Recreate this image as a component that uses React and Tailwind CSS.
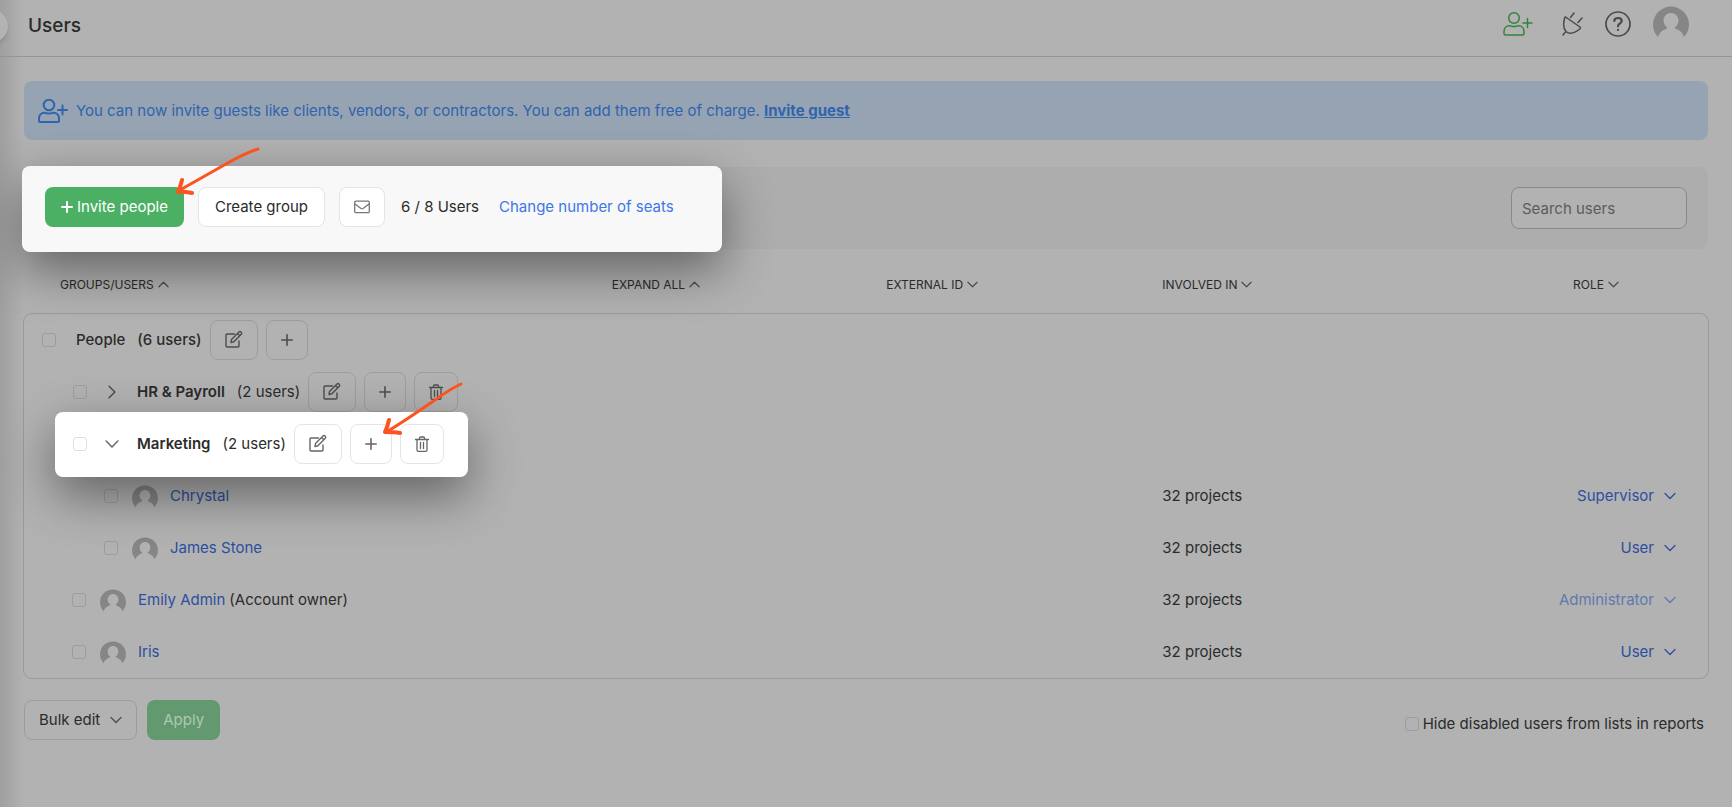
import React, { useState } from 'react';

const Icon = ({ className, box = '0 0 16 16', width = 1, children }) => (
    <svg className={className} viewBox={box} fill="none" stroke="currentColor" strokeWidth={width} strokeLinecap="round" strokeLinejoin="round" aria-hidden="true">
        {children}
    </svg>
);

const Chevron = ({ dir = 'down', className = 'h-3 w-3' }) => (
    <Icon className={className} box="0 0 12 12" width={1.3}>
        {dir === 'down' && <path d="M1 3.5 L6 8.5 L11 3.5" />}
        {dir === 'up' && <path d="M1 8.5 L6 3.5 L11 8.5" />}
        {dir === 'right' && <path d="M3.5 1 L8.5 6 L3.5 11" />}
    </Icon>
);

const UserPlus = ({ className, width }) => (
    <Icon className={className} box="0 0 30 26" width={width}>
        <circle cx="11" cy="7" r="5.3" />
        <path d="M6.5 14.8 C8 14.8 8.5 15.6 11 15.6 C13.5 15.6 14 14.8 15.5 14.8 C19 14.8 21 17.5 21 20.5 V22.5 Q21 24 19.5 24 H2.5 Q1 24 1 22.5 V20.5 C1 17.5 3 14.8 6.5 14.8 Z" />
        <path d="M24.5 7.5 V16.5 M20 12 H29" />
    </Icon>
);

const Avatar = ({ className }) => (
    <svg className={className} viewBox="0 0 36 32" fill="currentColor" aria-hidden="true">
        <path d="M5 31 A18 18 0 1 1 31 31 C30 27 27 24.5 23 23 C21 22 22 21 23.5 20 C28 14 24 7 18 7 C12 7 8 14 12.5 20 C14 21 15 22 13 23 C9 24.5 6 27 5 31 Z" />
    </svg>
);

const EditIcon = () => (
    <Icon className="h-5 w-5" box="0 0 20 20" width={1.4}>
        <path d="M10.5 4 H3 Q2 4 2 5 V16 Q2 17 3 17 H14 Q15 17 15 16 V11" />
        <path d="M7 12.5 L7.5 9.5 L15 2 Q16 1 17.2 2.2 Q18.3 3.3 17.3 4.3 L9.9 11.8 Z M13.5 3.5 L15.8 5.8" />
    </Icon>
);

const PlusIcon = () => (
    <Icon className="h-3 w-3" box="0 0 12 12" width={1.6}>
        <path d="M6 0.8 V11.2 M0.8 6 H11.2" />
    </Icon>
);

const TrashIcon = () => (
    <Icon className="h-4 w-4" width={1.3}>
        <path d="M1.5 3.5 H14.5 M3 3.5 V14 Q3 15.3 4.3 15.3 H11.7 Q13 15.3 13 14 V3.5 M5 3.5 L6 1 H10 L11 3.5 M6.5 6.5 V12.5 M9.5 6.5 V12.5" />
    </Icon>
);

const Checkbox = ({ label, light }) => (
    <input
        type="checkbox"
        aria-label={label}
        className={`h-[14px] w-[14px] shrink-0 appearance-none rounded-[3px] border ${light ? 'border-[#dedede]' : 'border-[#9d9d9d]'}`}
    />
);

const GroupActions = ({ name, canDelete, light }) => {
    const button = `flex h-10 items-center justify-center rounded-lg border ${light ? 'border-[#e4e4e4] text-[#666666]' : 'border-[#9d9d9d] text-[#4d4d4d]'}`;
    return (
        <div className="flex gap-2">
            <button type="button" aria-label={`Edit ${name}`} className={`${button} w-12`}><EditIcon /></button>
            <button type="button" aria-label={`Add to ${name}`} className={`${button} w-[42px]`}><PlusIcon /></button>
            {canDelete && (
                <button type="button" aria-label={`Delete ${name}`} className={`${button} w-[44px]`}><TrashIcon /></button>
            )}
        </div>
    );
};

const columns = [
    { label: 'GROUPS/USERS', dir: 'up', className: 'w-[34.9%] pl-9' },
    { label: 'EXPAND ALL', dir: 'up', className: 'w-[16.3%]' },
    { label: 'EXTERNAL ID', dir: 'down', className: 'w-[16.4%]' },
    { label: 'INVOLVED IN', dir: 'down', className: 'w-[16.4%]' },
    { label: 'ROLE', dir: 'down', className: 'pr-[89px]', end: true }
];

const users = [
    { name: 'Chrystal', role: 'Supervisor', nested: true },
    { name: 'James Stone', role: 'User', nested: true },
    { name: 'Emily Admin', role: 'Administrator', note: '(Account owner)', locked: true },
    { name: 'Iris', role: 'User' }
];

const UserRow = ({ user }) => (
    <tr className="h-[52px]">
        <td colSpan={3}>
            <div className={`flex items-center ${user.nested ? 'pl-20' : 'pl-12'}`}>
                <Checkbox label={`Select ${user.name}`} />
                <Avatar className="ml-[14px] h-[23px] w-[26px] text-[#868686]" />
                <a href="#user" className="ml-3 text-[#2d4f9f]">{user.name}</a>
                {user.note && <span className="ml-1">{user.note}</span>}
            </div>
        </td>
        <td>32 projects</td>
        <td className="pr-8">
            <button type="button" className={`ml-auto flex items-center gap-[10px] ${user.locked ? 'text-[#6079ae]' : 'text-[#2d4f9f]'}`}>
                {user.role}
                <Chevron />
            </button>
        </td>
    </tr>
);

export default function App() {
    const [search, setSearch] = useState('');

    return (
        <div className="relative min-h-screen overflow-hidden bg-[#b2b2b2] font-['Inter',sans-serif] text-[15px] leading-5 text-[#2b2b2b]">
            {/* Edge of the collapsed sidebar */}
            <div className="absolute inset-y-0 left-0 w-6 bg-linear-to-r from-[#9f9f9f] to-transparent" />
            <div className="absolute -left-6 top-[10px] h-8 w-8 rounded-full bg-[#b3b3b3] shadow-md" />

            <header className="relative flex h-[57px] items-center justify-between border-b border-[#959595] pb-1 pl-7 pr-[43px]">
                <h1 className="text-[19px] font-medium">Users</h1>
                <div className="flex items-center pb-1 text-[#4a4a4a]">
                    <button type="button" aria-label="Invite people" className="mr-7 text-[#34823f]"><UserPlus className="h-[26px] w-[30px]" width={1.5} /></button>
                    <button type="button" aria-label="Integrations" className="mr-5">
                        <Icon className="h-6 w-6" box="0 0 24 24" width={1.5}>
                            <path d="M4.5 5 L19 15 Q20 16 18.8 17 C15 20 9 23 5 19.5 C1.5 15.5 2.5 10 3.7 5.7 Q4 4.7 4.5 5 Z M9.5 5.5 L13 1 M17 10.5 L21 6 M4.5 20 L2 23" />
                        </Icon>
                    </button>
                    <button type="button" aria-label="Help" className="mr-[22px]">
                        <Icon className="h-[26px] w-[26px]" box="0 0 26 26" width={1.7}>
                            <circle cx="13" cy="13" r="12" />
                            <path d="M9.3 10 C9.3 6 16.7 6 16.7 10 C16.7 12.5 13 12.3 13 15.3 M13 18.8 V19" strokeWidth="2.2" />
                        </Icon>
                    </button>
                    <button type="button" aria-label="Account" className="pb-1"><Avatar className="h-8 w-9 text-[#868686]" /></button>
                </div>
            </header>

            <main className="relative px-6 pt-6">
                <div className="flex h-[59px] items-center rounded-lg bg-[#96a3b2] pl-[14px] text-[#3064ad]">
                    <UserPlus className="h-[26px] w-[30px]" width={2} />
                    <p className="ml-2">
                        You can now invite guests like clients, vendors, or contractors. You can add them free of charge.{' '}
                        <a href="#invite" className="font-bold underline">Invite guest</a>
                    </p>
                </div>

                <div className="mt-[27px] flex h-[82px] items-center justify-between rounded-lg bg-[#adadad] pr-[21px]">
                    <div className="relative z-10 -ml-0.5 -mt-px flex h-[86px] items-center self-start rounded-lg bg-[#f8f8f8] pb-1 pl-[23px] pr-12 shadow-[0_18px_50px_rgba(0,0,0,0.45)]">
                        <button type="button" className="flex h-10 items-center gap-1 rounded-lg bg-[#4bb063] px-4 text-white">
                            <Icon className="h-3 w-3" box="0 0 12 12" width={2}><path d="M6 1 V11 M1 6 H11" /></Icon>
                            Invite people
                        </button>
                        <button type="button" className="ml-[14px] h-10 rounded-lg border border-[#e4e4e4] bg-white px-4">Create group</button>
                        <button type="button" aria-label="Send email" className="ml-[14px] flex h-10 w-[46px] items-center justify-center rounded-lg border border-[#e4e4e4] bg-white text-[#777777]">
                            <Icon className="h-4 w-4" width={1.3}>
                                <rect x="0.7" y="2.2" width="14.6" height="11.5" rx="1.2" />
                                <path d="M1 5 L7 9.5 Q8 10.2 9 9.5 L15 5" />
                            </Icon>
                        </button>
                        <span className="ml-4">6 / 8 Users</span>
                        <a href="#seats" className="ml-5 text-[#3f76e8]">Change number of seats</a>
                        <svg className="absolute left-[154px] top-[-19px] h-12 w-[84px]" viewBox="0 0 84 48" fill="none" stroke="#fa5420" strokeWidth="3" strokeLinecap="round" aria-hidden="true">
                            <path d="M82 2 C71 5 59 12 50 17 C36 25 18 35 4 43" />
                            <path d="M6 33 C5 37 4 41 2 45 C7 44 11 45 16 46" strokeWidth="4" strokeLinejoin="round" />
                        </svg>
                    </div>
                    <input
                        type="text"
                        aria-label="Search users"
                        placeholder="Search users"
                        className="h-[42px] w-44 rounded-lg border border-[#8a8a8a] bg-[#b2b2b2] px-[10px] outline-none placeholder:text-[#5c5c5c]"
                        value={search}
                        onChange={e => setSearch(e.target.value)}
                    />
                </div>

                <table className="w-full table-fixed text-left">
                    <thead>
                        <tr className="h-[65px] text-xs">
                            {columns.map(col => (
                                <th key={col.label} className={`pt-1.5 font-normal ${col.className}`}>
                                    <span className={`flex items-center gap-1 ${col.end ? 'justify-end' : ''}`}>
                                        {col.label}
                                        <Chevron dir={col.dir} className="h-[11px] w-[11px] text-[#4d4d4d]" />
                                    </span>
                                </th>
                            ))}
                        </tr>
                    </thead>
                    <tbody className="rounded-lg outline outline-[#9a9a9a]">
                        <tr className="h-[52px]">
                            <td colSpan={5}>
                                <div className="flex items-center pl-[18px]">
                                    <Checkbox label="Select People" />
                                    <span className="ml-5 font-medium">People</span>
                                    <span className="ml-3 mr-2 font-medium">(6 users)</span>
                                    <GroupActions name="People" />
                                </div>
                            </td>
                        </tr>
                        <tr className="h-[52px]">
                            <td colSpan={5}>
                                <div className="flex items-center pl-[49px]">
                                    <Checkbox label="Select HR & Payroll" />
                                    <button type="button" aria-label="Expand HR & Payroll" className="ml-[18px] mr-[18px] text-[#4d4d4d]"><Chevron dir="right" className="h-[14px] w-[14px]" /></button>
                                    <span className="font-semibold">HR &amp; Payroll</span>
                                    <span className="ml-3 mr-2">(2 users)</span>
                                    <GroupActions name="HR & Payroll" canDelete />
                                </div>
                            </td>
                        </tr>
                        <tr className="h-[52px]">
                            <td colSpan={5}>
                                <div className="relative z-10 -my-2 ml-[31px] flex h-[65px] w-fit items-center rounded-lg bg-white pl-[18px] pr-6 shadow-[0_18px_50px_rgba(0,0,0,0.45)]">
                                    <Checkbox label="Select Marketing" light />
                                    <button type="button" aria-label="Collapse Marketing" className="ml-[18px] mr-[18px] text-[#666666]"><Chevron className="h-[14px] w-[14px]" /></button>
                                    <span className="font-semibold">Marketing</span>
                                    <span className="ml-3 mr-2">(2 users)</span>
                                    <GroupActions name="Marketing" canDelete light />
                                    <svg className="absolute right-[5px] top-[-30px] h-[54px] w-[80px]" viewBox="0 0 80 54" fill="none" stroke="#fa5420" strokeWidth="3" strokeLinecap="round" aria-hidden="true">
                                        <path d="M78 2 C69 6 59 13 52 18 C36 29 20 40 5 49" />
                                        <path d="M6 38 C5 42 4 46 2 50 C7 50 12 50 17 51" strokeWidth="4" strokeLinejoin="round" />
                                    </svg>
                                </div>
                            </td>
                        </tr>
                        {users.map(user => <UserRow key={user.name} user={user} />)}
                    </tbody>
                </table>

                <div className="mt-[22px] flex items-center">
                    <button type="button" className="flex h-10 items-center gap-[10px] rounded-lg border border-[#9d9d9d] px-[14px]">
                        Bulk edit
                        <Chevron className="h-3 w-3 text-[#4d4d4d]" />
                    </button>
                    <button type="button" className="ml-[10px] h-10 rounded-lg bg-[#63996e] px-4 text-[#aec8b4]">Apply</button>
                    <label className="ml-auto flex items-center gap-1 pr-1 pt-2">
                        <Checkbox label="Hide disabled users from lists in reports" />
                        Hide disabled users from lists in reports
                    </label>
                </div>
            </main>
        </div>
    );
}
